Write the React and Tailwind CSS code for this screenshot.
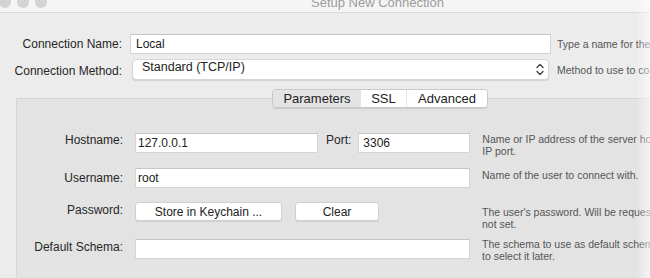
import React from "react";

const font = "font-['Liberation_Sans','Helvetica_Neue',Arial,sans-serif]";

const Chevrons = () => (
  <svg width="8" height="13" viewBox="0 0 8 13" fill="none" stroke="#3a3a3a" strokeWidth="1.3" strokeLinecap="round" strokeLinejoin="round">
    <path d="M1 4.5 L4 1.5 L7 4.5" />
    <path d="M1 8.5 L4 11.5 L7 8.5" />
  </svg>
);

const Help = ({ children, className = "" }) => (
  <div className={`shrink-0 text-[10.5px] leading-[12px] text-[#555] whitespace-nowrap ${className}`}>
    {children}
  </div>
);

const Label = ({ children, className = "" }) => (
  <div className={`shrink-0 text-right text-[12px] leading-[14px] text-[#262626] whitespace-nowrap ${className}`}>
    {children}
  </div>
);

const Field = ({ value, className = "" }) => (
  <div
    className={`shrink-0 h-[20px] bg-white border border-[#d4d4d4] border-t-[#c6c6c6] flex items-center pl-[2px] text-[12px] text-[#222] whitespace-nowrap ${className}`}
  >
    {value}
  </div>
);

const Button = ({ children, className = "" }) => (
  <div
    className={`shrink-0 h-[19px] bg-white rounded-[3px] border border-[#d0d0d0] shadow-[0_1px_0_rgba(0,0,0,0.08)] flex items-center justify-center text-[12px] text-[#222] whitespace-nowrap ${className}`}
  >
    {children}
  </div>
);

const App = () => {
  return (
    <div className={`w-[650px] h-[278px] relative overflow-hidden bg-[#ececec] ${font}`}>
      {/* title bar */}
      <div className="h-[13px] bg-[#f5f5f5] border-b border-[#d9d9d9] flex items-start overflow-hidden">
        <div className="shrink-0 flex gap-[6px] -mt-[4px] -ml-[1px]">
          <span className="w-[12px] h-[12px] rounded-full bg-[#d3d3d3]" />
          <span className="w-[12px] h-[12px] rounded-full bg-[#d3d3d3]" />
          <span className="w-[12px] h-[12px] rounded-full bg-[#d3d3d3]" />
        </div>
        <div className="shrink-0 ml-[264px] -mt-[5px] text-[13px] leading-[15px] text-[#9c9c9c] whitespace-nowrap">
          Setup New Connection
        </div>
      </div>

      {/* top rows */}
      <div className="mt-[21px] flex items-center h-[19px]">
        <Label className="w-[122px]">Connection Name:</Label>
        <Field value={<span className="pl-[3px]">Local</span>} className="ml-[8px] w-[421px] h-[19px]" />
        <Help className="ml-[6px]">Type a name for the connection</Help>
      </div>

      <div className="mt-[6px] flex items-center h-[21px]">
        <Label className="w-[122px] mt-[2px]">Connection Method:</Label>
        <div className="shrink-0 ml-[10px] w-[417px] h-[21px] bg-white rounded-[4px] border border-[#d6d6d6] shadow-[0_1px_1px_rgba(0,0,0,0.12)] flex items-center justify-between pl-[9px] pr-[4px]">
          <span className="text-[12.5px] text-[#222] leading-[15px] -mt-[4px] whitespace-nowrap">Standard (TCP/IP)</span>
          <Chevrons />
        </div>
        <Help className="ml-[8px] mt-[1px]">Method to use to connect to the RDBMS</Help>
      </div>

      {/* tabs */}
      <div className="mt-[9px] -mb-[10px] relative z-10 flex pl-[272px]">
        <div className="shrink-0 flex h-[19px] rounded-[4px] border border-[#c9c9c9] shadow-[0_1px_1px_rgba(0,0,0,0.1)] overflow-hidden text-[13px] text-[#222]">
          <div className="w-[88px] bg-[#e4e4e4] flex items-center justify-center">Parameters</div>
          <div className="w-[45px] bg-white flex items-center justify-center">SSL</div>
          <div className="w-[81px] bg-white border-l border-[#e6e6e6] flex items-center justify-center">Advanced</div>
        </div>
      </div>

      {/* panel */}
      <div className="ml-[16px] h-[190px] bg-[#e3e3e3] border-t border-l border-[#d6d6d6] pt-[34px]">
        {/* Hostname */}
        <div className="flex items-start h-[20px]">
          <Label className="w-[106px] mt-[0px]">Hostname:</Label>
          <Field value="127.0.0.1" className="ml-[12px] w-[183px]" />
          <Label className="ml-[8px] mt-[0px]">Port:</Label>
          <Field value={<span className="pl-[2px]">3306</span>} className="ml-[7px] w-[112px]" />
          <Help className="ml-[12px] mt-[0px]">
            Name or IP address of the server host - and
            <br />
            IP port.
          </Help>
        </div>

        {/* Username */}
        <div className="mt-[15px] flex items-start h-[20px]">
          <Label className="w-[106px] mt-[3px]">Username:</Label>
          <Field value="root" className="ml-[12px] w-[335px]" />
          <Help className="ml-[12px] mt-[1px]">Name of the user to connect with.</Help>
        </div>

        {/* Password */}
        <div className="mt-[14px] flex items-start h-[19px]">
          <Label className="w-[106px] mt-[1px]">Password:</Label>
          <Button className="ml-[12px] w-[147px]">Store in Keychain ...</Button>
          <Button className="ml-[13px] w-[84px]">Clear</Button>
          <Help className="ml-[103px] mt-[4px]">
            The user's password. Will be requested later if it's
            <br />
            not set.
          </Help>
        </div>

        {/* Default Schema */}
        <div className="mt-[18px] flex items-start h-[19px]">
          <Label className="w-[106px] mt-[1px]">Default Schema:</Label>
          <Field value="" className="ml-[12px] w-[335px] h-[19px]" />
          <Help className="ml-[12px] mt-[-1px]">
            The schema to use as default schema. Leave blank
            <br />
            to select it later.
          </Help>
        </div>
      </div>

      {/* edge of the window beside */}
      <div className="pointer-events-none absolute top-0 right-0 w-[14px] h-full bg-gradient-to-r from-transparent to-white/60" />
    </div>
  );
};

export default App;
